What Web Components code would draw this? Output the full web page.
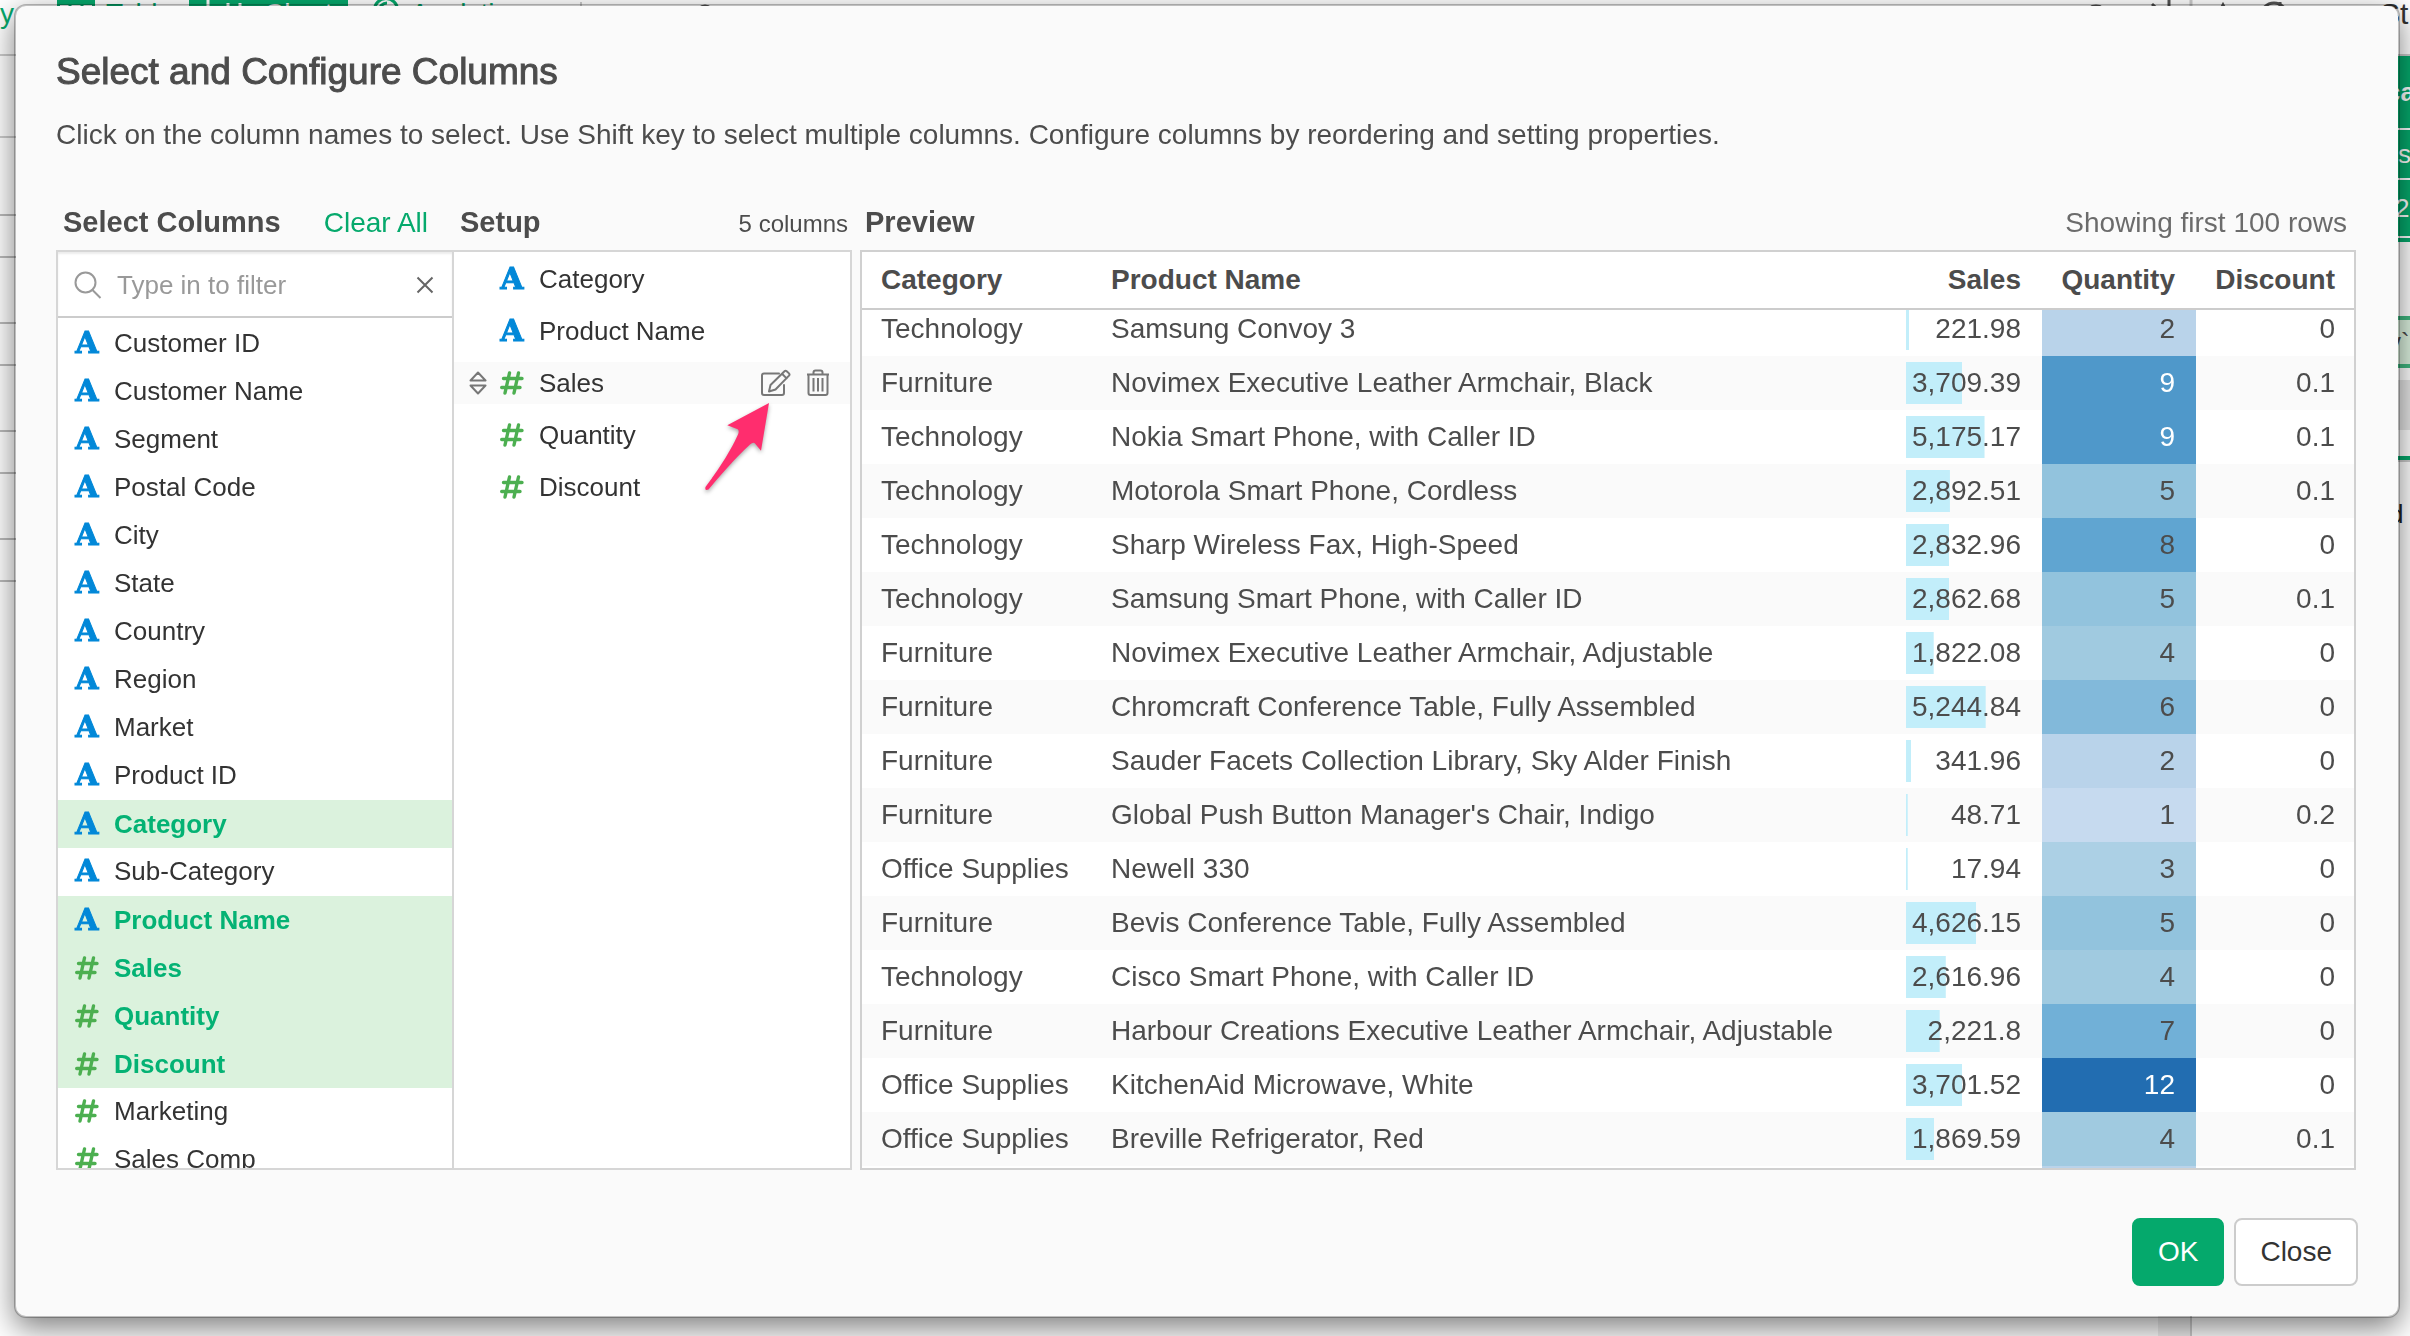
<!DOCTYPE html>
<html lang="en">
<head>
<meta charset="utf-8">
<title>Select and Configure Columns</title>
<style>
  html, body { margin: 0; height: 100%; overflow: hidden; background: #fff; }
  body { font: 28px/36px "Liberation Sans", Arial, sans-serif; color: #4c4c4c; }
</style>
</head>
<body>
<app-workspace></app-workspace>
<modal-dialog>
  <span slot="title">Select and Configure Columns</span>
  <span slot="description">Click on the column names to select. Use Shift key to select multiple columns. Configure columns by reordering and setting properties.</span>
  <column-picker></column-picker>
  <column-setup></column-setup>
  <data-preview></data-preview>
  <ui-button slot="footer" primary>OK</ui-button>
  <ui-button slot="footer">Close</ui-button>
</modal-dialog>

<script>
class Base extends HTMLElement {
  connectedCallback() {
    if (this.shadowRoot) return;
    this.attachShadow({ mode: 'open' }).innerHTML =
      '<style>*{box-sizing:border-box}' + this.css() + '</style>' + this.html();
    this.ready();
  }
  css() { return ''; }
  html() { return '<slot></slot>'; }
  ready() {}
}

/* The application screen that sits under the dialog */
customElements.define('app-workspace', class extends Base {
  css() { return `
    :host { display: flex; flex-direction: column; height: 100vh; overflow: hidden; }
    header { display: flex; align-items: center; height: 80px; margin-top: -26px; flex: none; color: #05a96c; white-space: nowrap; }
    header svg { flex: none; fill: none; stroke: currentColor; stroke-width: 3; }
    .tab { display: flex; align-items: center; gap: 11px; height: 56px; padding: 0 16px; }
    .first { padding-left: 43px; }
    .on { background: #05a96c; color: #fff; padding: 0 16px; }
    .on svg { margin-right: 8px; }
    .last { padding-left: 25px; }
    .rule { width: 2px; height: 24px; background: #ccc; }
    .mark { margin-left: 112px; color: #555; }
    .tools { margin-left: auto; display: flex; align-items: center; gap: 4px; color: #555; overflow: hidden; }
    .tools b { font-weight: 400; font-size: 30px; color: #333; width: 30px; }
    main { flex: 1; display: flex; border-top: 2px solid #ccc; min-height: 0; }
    .sheet { flex: 1; }
    .sheet div { height: 66px; border-bottom: 2px solid #bbb; }
    .sheet .a { height: 82px; border-color: #ccc; } .sheet .b { height: 78px; }
    .sheet .c { height: 42px; }
    .bar { width: 32px; background: #eee; }
    .props { width: 220px; border-left: 2px solid #ccc; overflow: hidden; white-space: nowrap; }
    .props div { padding-left: 206px; display: flex; align-items: center; font-size: 26px; }
    .g { background: #05a96c; color: #fff; border-bottom: 2px solid #fff; }
    .props .p1 { height: 74px; padding-left: 194px; font-weight: 700; }
    .p2 { height: 50px; } .props .p3 { height: 58px; padding-left: 203px; }
    .p4 { height: 78px; border-top: 4px solid #05a96c; }
    .props .p5 { height: 52px; border: solid #40b880; border-width: 4px 0; background: #dcf2df; padding-left: 196px; }
    .p6 { height: 12px; } .p7 { height: 50px; background: #e6e6e6; } .p8 { height: 30px; border-bottom: 4px solid #05a96c; }
    .props .p9 { height: 106px; border-top: 2px solid #ccc; padding-left: 197px; color: #222; }
  `; }
  html() { return `
    <header>
      <span>y</span>
      <span class="tab first"><svg width="38" height="28" viewBox="0 0 38 28"><path d="M1.500 1.500h35v25h-35zM1.500 16h35M13 2v25M25 2v25M1.500 3.500h35"/></svg>Table</span>
      <span class="tab on"><svg width="40" height="28" viewBox="0 0 40 28" stroke-width="2"><path d="M3 0v26h36M13 26V14M23 26V3M35 26V3"/></svg>Chart</span>
      <span class="tab last"><svg width="26" height="34" viewBox="0 0 26 34"><circle cx="13" cy="13" r="11.500"/><path d="M6 14a8 8 0 0 1 8-8"/></svg>Analytics</span>
      <span class="rule" style="margin-left:42px"></span>
      <svg class="mark" width="22" height="20" viewBox="0 0 22 20"><circle cx="11" cy="10" r="8"/></svg>
      <span class="tools">
        <svg width="290" height="28" viewBox="0 0 290 28"><path d="M2 14Q2 6 10 6T18 14M66 4l10 9M83 0v26M137 5L129 20h16zM194 2v24"/><path d="M105 0v26" stroke="#ccc"/><circle cx="188" cy="16" r="13"/></svg>
        <b>St</b>
      </span>
    </header>
    <main>
      <div class="sheet"><div class="a"></div><div class="b"></div><div class="c"></div><div></div><div class="c"></div><div></div><div class="c"></div><div></div><div class="c"></div></div>
      <div class="bar"></div>
      <div class="props"><div class="g p1">ca</div><div class="g p2">s</div><div class="g p3">2</div><div class="p4"></div><div class="p5">y\`</div><div class="p6"></div><div class="p7"></div><div class="p8"></div><div class="p9">d</div></div>
    </main>`; }
});

customElements.define('modal-dialog', class extends Base {
  css() { return `
    :host { position: fixed; inset: 0; display: flex; padding: 4px 10px 18px 14px; box-sizing: border-box; }
    section { flex: 1; display: flex; flex-direction: column; padding: 44px 40px 30px; background: #fafafa; background-clip: padding-box;
      border: 2px solid rgba(0,0,0,.25); border-radius: 12px; box-shadow: 0 10px 30px rgba(0,0,0,.5); min-width: 0; }
    h1 { margin: 0; font-size: 37px; line-height: 44px; font-weight: 400; -webkit-text-stroke: 1px currentColor; }
    p { margin: 23px 0 51px; }
    .body { flex: 1; min-height: 0; display: grid; grid-template-columns: 398px 398px minmax(0, 1fr); grid-template-rows: minmax(0, 1fr); padding-right: 2px; }
    footer { display: flex; justify-content: flex-end; gap: 10px; margin-top: 48px; }
  `; }
  html() { return `<section role="dialog" aria-modal="true" aria-labelledby="t"><h1 id="t"><slot name="title"></slot></h1>
    <p><slot name="description"></slot></p><div class="body"><slot></slot></div><footer><slot name="footer"></slot></footer></section>`; }
});

customElements.define('ui-button', class extends Base {
  css() { return `
    :host { display: block; }
    button { height: 68px; padding: 0 24px; font: inherit; color: #333; background: #fff; border: 2px solid #ccc; border-radius: 8px; }
    :host([primary]) button { background: #05a96c; border-color: #05a96c; color: #fff; }
  `; }
  html() { return '<button type="button"><slot></slot></button>'; }
});

/* Data type mark: text or number */
customElements.define('type-icon', class extends Base {
  css() { return `
    :host { display: flex; width: 24px; height: 24px; flex: none; justify-content: center; align-items: center; }
    span { font: 700 30px/24px "DejaVu Serif", serif; color: #0288d8; -webkit-text-stroke: 1px currentColor; }
    svg { fill: none; stroke: #4caf50; stroke-width: 3.4; stroke-linecap: round; }
  `; }
  html() { return this.getAttribute('kind') === 'text'
    ? '<span>A</span>'
    : '<svg width="24" height="24" viewBox="0 0 24 24"><path d="M9.500 2L5 22M18.500 2L14 22M3.500 7.500h18.500M1.700 16.500H20"/></svg>'; }
});

customElements.define('column-item', class extends Base {
  css() { return `
    :host { display: flex; align-items: center; gap: 15px; height: 48px; padding: 0 0 2px 17px; box-sizing: border-box; font-size: 26px; color: #333; white-space: nowrap; flex: none; }
    :host([selected]) { background: #dbf2dd; color: #04b274; font-weight: 700; padding-bottom: 0; }
  `; }
  html() { return `<type-icon kind="${this.getAttribute('kind')}"></type-icon><slot></slot>`; }
});

customElements.define('column-picker', class extends Base {
  css() { return `
    :host { display: flex; flex-direction: column; min-height: 0; }
    .head { display: flex; justify-content: space-between; align-items: baseline; height: 46px; padding: 0 26px 0 7px; }
    h2 { margin: 0; font-size: 29px; line-height: 36px; }
    a { color: #05a96c; text-decoration: none; }
    .panel { flex: 1; min-height: 0; display: flex; flex-direction: column; background: #fff; border: 2px solid #d6d6d6; }
    .filter { display: flex; align-items: center; height: 66px; flex: none; padding: 2px 14px 0 16px; border-bottom: 2px solid #ccc; box-shadow: inset 0 2px 2px rgba(0,0,0,.08); }
    .filter svg { fill: none; flex: none; }
    input { flex: 1; min-width: 0; border: 0; padding: 0; margin-left: 15px; outline: 0; background: none; font: inherit; font-size: 26px; color: #333; }
    input::placeholder { color: #999; opacity: 1; }
    button { border: 0; padding: 4px; background: none; display: flex; }
    .list { flex: 1; min-height: 0; overflow: hidden; padding-top: 2px; display: flex; flex-direction: column; }
  `; }
  html() {
    const cols = ['Customer ID','Customer Name','Segment','Postal Code','City','State','Country','Region','Market','Product ID','*Category','Sub-Category','*Product Name','#*Sales','#*Quantity','#*Discount','#Marketing','#Sales Comp'];
    const items = cols.map(c => {
      const num = c.includes('#'), sel = c.includes('*');
      return `<column-item role="option" aria-selected="${sel}" kind="${num ? 'number' : 'text'}"${sel ? ' selected' : ''}>${c.replace(/[#*]/g, '')}</column-item>`;
    }).join('');
    return `<div class="head"><h2>Select Columns</h2><a href="#">Clear All</a></div>
    <div class="panel">
      <div class="filter">
        <svg width="28" height="28" viewBox="0 0 28 28" stroke="#999" stroke-width="2"><circle cx="11.500" cy="11.500" r="10"/><path d="M18.500 19l8 8"/></svg>
        <input type="text" placeholder="Type in to filter" aria-label="Type in to filter">
        <button type="button" aria-label="Clear filter"><svg width="18" height="18" viewBox="0 0 18 18" stroke="#666" stroke-width="2"><path d="M1.500 1.500l15 15M16.500 1.500l-15 15"/></svg></button>
      </div>
      <div class="list" role="listbox" aria-multiselectable="true">${items}</div>
    </div>`;
  }
});

customElements.define('column-setup', class extends Base {
  css() { return `
    :host { display: flex; flex-direction: column; min-height: 0; }
    .head { display: flex; justify-content: space-between; align-items: baseline; height: 46px; padding: 0 4px 0 6px; }
    h2 { margin: 0; font-size: 29px; line-height: 36px; }
    small { font-size: 24px; }
    ul { flex: 1; min-height: 0; margin: 0; padding: 6px 0; list-style: none; display: flex; flex-direction: column; gap: 10px;
      background: #fff; border: solid #d6d6d6; border-width: 2px 2px 2px 0; font-size: 26px; color: #333; }
    li { display: flex; align-items: center; height: 42px; padding: 0 20px 0 46px; gap: 15px; position: relative; }
    li.on { background: #fafafa; padding-left: 15px; }
    li.on .name { flex: 1; }
    svg { fill: none; stroke: #777; stroke-width: 2; display: block; }
    button { border: 0; background: none; padding: 0; }
    .arrow { position: absolute; left: 248px; top: 38px; stroke: none; fill: #ff2d6e; overflow: visible; filter: drop-shadow(0 2px 2px rgba(0,0,0,.35)); }
  `; }
  html() {
    const row = (k, n) => `<li><type-icon kind="${k}"></type-icon><span class="name">${n}</span></li>`;
    return `<div class="head"><h2>Setup</h2><small>5 columns</small></div>
    <ul>${row('text','Category')}${row('text','Product Name')}
      <li class="on">
        <svg width="18" height="24" viewBox="0 0 18 24" stroke-linejoin="round"><path d="M9 1.500L16.500 9.500h-15zM9 22.500L16.500 14.500h-15z"/></svg>
        <type-icon kind="number" style="margin-left:-2px"></type-icon><span class="name">Sales</span>
        <button type="button" aria-label="Edit"><svg width="30" height="28" viewBox="0 0 30 28" stroke-linejoin="round" stroke-linecap="round"><path d="M18 4.500H3a2 2 0 0 0-2 2V24a2 2 0 0 0 2 2h18a2 2 0 0 0 2-2V16M8 22.500l1.500-6.500L23.500 2.200q1-1 2.200 0l2.300 2.200q1 1.100 0 2.200L14.500 20.500zM21 4.800l4.600 4.600"/></svg></button>
        <button type="button" aria-label="Delete"><svg width="24" height="28" viewBox="0 0 24 28" stroke-linejoin="round"><path d="M1 5.500h22M2.500 5.500V24a2 2 0 0 0 2 2h15a2 2 0 0 0 2-2V5.500M7.500 5V3.500a2 2 0 0 1 2-2h5a2 2 0 0 1 2 2V5M7.500 9v13.500M12 9v13.500M16.500 9v13.500"/></svg></button>
        <svg class="arrow" width="72" height="92" viewBox="0 0 72 92"><path d="M67 3L25.300 25.300L35.700 29.300Q37.500 31 36 34.500Q26 57 3.500 87Q2.500 91 6.500 89.500Q30 61 48 44.500Q51.300 41.500 53 43.500L59 50.700z"/></svg>
      </li>
      ${row('number','Quantity')}${row('number','Discount')}</ul>`;
  }
});

customElements.define('data-preview', class extends Base {
  css() { return `
    :host { display: flex; flex-direction: column; min-height: 0; min-width: 0; margin-left: 8px; }
    .head { display: flex; justify-content: space-between; align-items: baseline; height: 46px; padding: 0 9px 0 5px; }
    h2 { margin: 0; font-size: 29px; line-height: 36px; }
    .note { color: #6b6b6b; }
    .scroll { flex: 1; min-height: 0; overflow: hidden; background: #fff; border: 2px solid #d0d0d0; }
    table { width: 100%; border-collapse: separate; border-spacing: 0; table-layout: fixed; white-space: nowrap; }
    th { position: sticky; top: 0; z-index: 1; height: 58px; padding: 0 19px; text-align: left; background: #fff; border-bottom: 2px solid #ccc; }
    td { height: 54px; padding: 0 19px; }
    th.n, td.n { text-align: right; padding: 0 19px 0 18px; }
    th.s, td.s { text-align: right; padding: 0 21px 0 18px; }
    th.q, td.q { padding-right: 21px; padding-left: 0; }
    th.n { padding-left: 0; }
    tbody tr:nth-child(even) { background: #fafafa; }
    .v { display: block; height: 42px; line-height: 42px; background: linear-gradient(#c2eefa, #c2eefa) no-repeat 0 0 / var(--w) 100%; }
    .light { color: #fff; }
  `; }
  html() {
    const shade = {1:'#c6daef',2:'#b9d3ea',3:'#acd0e5',4:'#a0cae0',5:'#92c3dd',6:'#82b9da',7:'#71b0d7',8:'#60a5d1',9:'#4f98ca',12:'#226db1'};
    const T = 'Technology', F = 'Furniture', O = 'Office Supplies';
    const rows = [
      [T,'Samsung Convoy 3','221.98',2,'0'],
      [F,'Novimex Executive Leather Armchair, Black','3,709.39',9,'0.1'],
      [T,'Nokia Smart Phone, with Caller ID','5,175.17',9,'0.1'],
      [T,'Motorola Smart Phone, Cordless','2,892.51',5,'0.1'],
      [T,'Sharp Wireless Fax, High-Speed','2,832.96',8,'0'],
      [T,'Samsung Smart Phone, with Caller ID','2,862.68',5,'0.1'],
      [F,'Novimex Executive Leather Armchair, Adjustable','1,822.08',4,'0'],
      [F,'Chromcraft Conference Table, Fully Assembled','5,244.84',6,'0'],
      [F,'Sauder Facets Collection Library, Sky Alder Finish','341.96',2,'0'],
      [F,"Global Push Button Manager's Chair, Indigo",'48.71',1,'0.2'],
      [O,'Newell 330','17.94',3,'0'],
      [F,'Bevis Conference Table, Fully Assembled','4,626.15',5,'0'],
      [T,'Cisco Smart Phone, with Caller ID','2,616.96',4,'0'],
      [F,'Harbour Creations Executive Leather Armchair, Adjustable','2,221.8',7,'0'],
      [O,'KitchenAid Microwave, White','3,701.52',12,'0'],
      [O,'Breville Refrigerator, Red','1,869.59',4,'0.1'],
    ];
    const max = 7573;
    const body = rows.map(([c, p, s, q, d]) => {
      const w = Math.max(1.5, parseFloat(s.replace(',', '')) / max * 100).toFixed(1);
      return `<tr><td>${c}</td><td>${p}</td><td class="s"><span class="v" style="--w:${w}%">${s}</span></td><td class="n q${q > 8 ? ' light' : ''}" style="background:${shade[q]}">${q}</td><td class="n">${d}</td></tr>`;
    }).join('');
    return `<div class="head"><h2>Preview</h2><span class="note">Showing first 100 rows</span></div>
    <div class="scroll"><table>
      <colgroup><col style="width:230px"><col><col style="width:154px"><col style="width:154px"><col style="width:158px"></colgroup>
      <thead><tr><th>Category</th><th>Product Name</th><th class="s">Sales</th><th class="n q">Quantity</th><th class="n">Discount</th></tr></thead>
      <tbody>${body}<tr><td></td><td></td><td></td><td style="background:${shade[2]}"></td><td></td></tr></tbody>
    </table></div>`;
  }
  ready() { this.shadowRoot.querySelector('.scroll').scrollTop = 8; }
});
</script>
</body>
</html>
